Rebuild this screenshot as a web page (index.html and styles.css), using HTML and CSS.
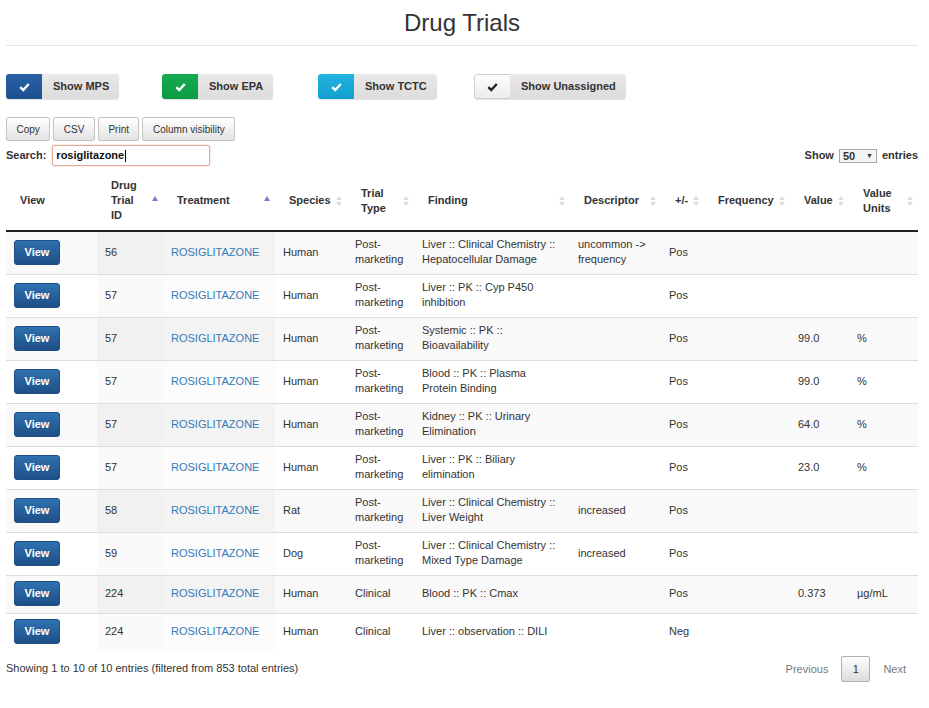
FILE: index.html
```html
<!DOCTYPE html>
<html>
<head>
<meta charset="utf-8">
<title>Drug Trials</title>
<link rel="stylesheet" href="styles.css">
</head>
<body>
<div class="page">
  <h1 class="title">Drug Trials</h1>

  <div class="toggles">
    <div class="toggle"><span class="tg-icon mps"><svg width="11" height="10" viewBox="0 0 11 10"><path d="M1.3 5.2 L4.2 8 L9.8 2" fill="none" stroke="#fff" stroke-width="2.4"/></svg></span><span class="tg-label">Show MPS</span></div>
    <div class="toggle"><span class="tg-icon epa"><svg width="11" height="10" viewBox="0 0 11 10"><path d="M1.3 5.2 L4.2 8 L9.8 2" fill="none" stroke="#fff" stroke-width="2.4"/></svg></span><span class="tg-label">Show EPA</span></div>
    <div class="toggle"><span class="tg-icon tctc"><svg width="11" height="10" viewBox="0 0 11 10"><path d="M1.3 5.2 L4.2 8 L9.8 2" fill="none" stroke="#fff" stroke-width="2.4"/></svg></span><span class="tg-label">Show TCTC</span></div>
    <div class="toggle"><span class="tg-icon unassigned"><svg width="11" height="10" viewBox="0 0 11 10"><path d="M1.3 5.2 L4.2 8 L9.8 2" fill="none" stroke="#222" stroke-width="2.4"/></svg></span><span class="tg-label">Show Unassigned</span></div>
  </div>

  <div class="tools">
    <button class="tool">Copy</button>
    <button class="tool">CSV</button>
    <button class="tool">Print</button>
    <button class="tool">Column visibility</button>
  </div>

  <div class="filter-row">
    <label class="search">Search: <span class="search-input">rosiglitazone<span class="caret"></span></span></label>
    <div class="length">Show <span class="select">50 <span class="arrow">▼</span></span> entries</div>
  </div>

  <table class="data">
    <colgroup>
      <col class="c-view"><col class="c-id"><col class="c-treat"><col class="c-species"><col class="c-type"><col class="c-finding"><col class="c-desc"><col class="c-pm"><col class="c-freq"><col class="c-value"><col class="c-units">
    </colgroup>
    <thead>
      <tr>
        <th><div class="th">View</div></th>
        <th><div class="th"><span>Drug Trial ID</span><i class="asc"></i></div></th>
        <th><div class="th"><span>Treatment</span><i class="asc"></i></div></th>
        <th><div class="th"><span>Species</span><i class="both"></i></div></th>
        <th><div class="th"><span>Trial Type</span><i class="both"></i></div></th>
        <th><div class="th"><span>Finding</span><i class="both"></i></div></th>
        <th><div class="th"><span>Descriptor</span><i class="both"></i></div></th>
        <th><div class="th"><span>+/-</span><i class="both"></i></div></th>
        <th><div class="th"><span>Frequency</span><i class="both"></i></div></th>
        <th><div class="th"><span>Value</span><i class="both"></i></div></th>
        <th><div class="th"><span>Value Units</span><i class="both"></i></div></th>
      </tr>
    </thead>
    <tbody>
      <tr class="odd">
        <td><a class="view">View</a></td><td class="s1">56</td><td class="s2"><a class="link">ROSIGLITAZONE</a></td><td>Human</td><td>Post-marketing</td><td>Liver :: Clinical Chemistry :: Hepatocellular Damage</td><td>uncommon -&gt; frequency</td><td>Pos</td><td></td><td></td><td></td>
      </tr>
      <tr class="even">
        <td><a class="view">View</a></td><td class="s1">57</td><td class="s2"><a class="link">ROSIGLITAZONE</a></td><td>Human</td><td>Post-marketing</td><td>Liver :: PK :: Cyp P450 inhibition</td><td></td><td>Pos</td><td></td><td></td><td></td>
      </tr>
      <tr class="odd">
        <td><a class="view">View</a></td><td class="s1">57</td><td class="s2"><a class="link">ROSIGLITAZONE</a></td><td>Human</td><td>Post-marketing</td><td>Systemic :: PK :: Bioavailability</td><td></td><td>Pos</td><td></td><td>99.0</td><td>%</td>
      </tr>
      <tr class="even">
        <td><a class="view">View</a></td><td class="s1">57</td><td class="s2"><a class="link">ROSIGLITAZONE</a></td><td>Human</td><td>Post-marketing</td><td>Blood :: PK :: Plasma Protein Binding</td><td></td><td>Pos</td><td></td><td>99.0</td><td>%</td>
      </tr>
      <tr class="odd">
        <td><a class="view">View</a></td><td class="s1">57</td><td class="s2"><a class="link">ROSIGLITAZONE</a></td><td>Human</td><td>Post-marketing</td><td>Kidney :: PK :: Urinary Elimination</td><td></td><td>Pos</td><td></td><td>64.0</td><td>%</td>
      </tr>
      <tr class="even">
        <td><a class="view">View</a></td><td class="s1">57</td><td class="s2"><a class="link">ROSIGLITAZONE</a></td><td>Human</td><td>Post-marketing</td><td>Liver :: PK :: Biliary elimination</td><td></td><td>Pos</td><td></td><td>23.0</td><td>%</td>
      </tr>
      <tr class="odd">
        <td><a class="view">View</a></td><td class="s1">58</td><td class="s2"><a class="link">ROSIGLITAZONE</a></td><td>Rat</td><td>Post-marketing</td><td>Liver :: Clinical Chemistry :: Liver Weight</td><td>increased</td><td>Pos</td><td></td><td></td><td></td>
      </tr>
      <tr class="even">
        <td><a class="view">View</a></td><td class="s1">59</td><td class="s2"><a class="link">ROSIGLITAZONE</a></td><td>Dog</td><td>Post-marketing</td><td>Liver :: Clinical Chemistry :: Mixed Type Damage</td><td>increased</td><td>Pos</td><td></td><td></td><td></td>
      </tr>
      <tr class="odd">
        <td><a class="view">View</a></td><td class="s1">224</td><td class="s2"><a class="link">ROSIGLITAZONE</a></td><td>Human</td><td>Clinical</td><td>Blood :: PK :: Cmax</td><td></td><td>Pos</td><td></td><td>0.373</td><td>µg/mL</td>
      </tr>
      <tr class="even">
        <td><a class="view">View</a></td><td class="s1">224</td><td class="s2"><a class="link">ROSIGLITAZONE</a></td><td>Human</td><td>Clinical</td><td>Liver :: observation :: DILI</td><td></td><td>Neg</td><td></td><td></td><td></td>
      </tr>
    </tbody>
  </table>

  <div class="footer">
    <div class="info">Showing 1 to 10 of 10 entries (filtered from 853 total entries)</div>
    <div class="paging">
      <span class="pg disabled">Previous</span>
      <span class="pg current">1</span>
      <span class="pg disabled">Next</span>
    </div>
  </div>
</div>
</body>
</html>
```
FILE: styles.css
```css
* { box-sizing: border-box; }
html, body { margin: 0; padding: 0; background: #fff; }
body {
  font-family: "Liberation Sans", Arial, sans-serif;
  font-size: 11px;
  line-height: 15px;
  color: #333;
}
.page {
  width: 912px;
  margin-left: 6px;
}
.title {
  margin: 0;
  padding: 8px 0 7px;
  font-size: 24px;
  line-height: 30px;
  font-weight: normal;
  text-align: center;
  color: #333;
  border-bottom: 1px solid #e5e5e5;
}

/* toggle buttons */
.toggles {
  display: grid;
  grid-template-columns: repeat(4, 156px);
  margin-top: 28px;
}
.toggle {
  display: inline-flex;
  height: 25px;
  justify-self: start;
  border-radius: 3px;
  overflow: hidden;
  box-shadow: 0 1px 1px rgba(0,0,0,0.12);
}
.tg-icon {
  width: 36px;
  display: flex;
  align-items: center;
  justify-content: center;
}
.tg-icon.mps { background: linear-gradient(#2761a5, #1d5190); }
.tg-icon.epa { background: linear-gradient(#14ab4f, #0b9b43); }
.tg-icon.tctc { background: linear-gradient(#22b3df, #139fcf); }
.tg-icon.unassigned {
  background: linear-gradient(#fdfdfd, #ececec);
  border: 1px solid #d0d0d0;
  border-right: none;
  border-radius: 3px 0 0 3px;
}
.tg-label {
  display: flex;
  align-items: center;
  padding: 0 10px 0 11px;
  font-weight: bold;
  color: #333;
  background: linear-gradient(#e9e9e9, #dcdcdc);
}

/* toolbar buttons */
.tools {
  display: flex;
  gap: 3px;
  margin-top: 18px;
}
.tool {
  height: 24px;
  padding: 0 9.5px;
  font-family: "Liberation Sans", Arial, sans-serif;
  font-size: 10px;
  color: #333;
  background: linear-gradient(#fff, #e3e3e3);
  border: 1px solid #c4c4c4;
  border-radius: 2px;
}

/* search / length */
.filter-row {
  display: flex;
  justify-content: space-between;
  align-items: center;
  margin-top: 4px;
  height: 21px;
}
.search {
  font-weight: bold;
  display: flex;
  align-items: center;
  gap: 6px;
}
.search-input {
  display: inline-flex;
  align-items: center;
  width: 158px;
  height: 21px;
  padding: 0 3px;
  border: 1px solid #e3a994;
  box-shadow: 0 0 2px rgba(232,140,110,0.5);
  border-radius: 2px;
  color: #111;
  font-weight: bold;
}
.caret {
  display: inline-block;
  width: 1px;
  height: 12px;
  background: #000;
  margin-left: 1px;
}
.length {
  font-weight: bold;
  display: flex;
  align-items: center;
  gap: 5px;
}
.select {
  display: inline-flex;
  align-items: center;
  justify-content: space-between;
  width: 38px;
  height: 14px;
  padding: 0 3px;
  border: 1px solid #a9a9a9;
  background: #f4f4f4;
  font-weight: bold;
  line-height: 12px;
}
.select .arrow { font-size: 7px; }

/* table */
.data {
  width: 912px;
  table-layout: fixed;
  border-collapse: collapse;
  margin-top: 7px;
}
.c-view { width: 91px; }
.c-id { width: 66px; }
.c-treat { width: 112px; }
.c-species { width: 72px; }
.c-type { width: 67px; }
.c-finding { width: 156px; }
.c-desc { width: 91px; }
.c-pm { width: 43px; }
.c-freq { width: 86px; }
.c-value { width: 59px; }
.c-units { width: 69px; }

.data th {
  padding: 5px 5px 7px 14px;
  font-weight: bold;
  text-align: left;
  vertical-align: middle;
  border-bottom: 2px solid #222;
}
.th {
  display: flex;
  align-items: center;
  justify-content: space-between;
  gap: 10px;
  min-height: 45px;
}
.th span { min-width: 0; }
.th i { flex: none; display: block; }
.th i.asc {
  width: 0; height: 0;
  border-left: 3.5px solid transparent;
  border-right: 3.5px solid transparent;
  border-bottom: 5px solid #8474d4;
  margin-top: -5px;
}
.th i.both {
  display: flex;
  flex-direction: column;
  align-items: center;
  gap: 2px;
  width: 7px;
}
.th i.both::before,
.th i.both::after {
  content: "";
  width: 0;
  height: 0;
  border-left: 3px solid transparent;
  border-right: 3px solid transparent;
}
.th i.both::before { border-bottom: 4px solid #dcdcdc; }
.th i.both::after { border-top: 4px solid #dcdcdc; }

.data td {
  padding: 5px 8px 7px;
  vertical-align: middle;
  border-top: 1px solid #ddd;
}
.data tbody tr:first-child td { border-top: none; }
.data tr.odd td { background: #f9f9f9; }
.data tr.odd td.s1 { background: #f1f1f1; }
.data tr.odd td.s2 { background: #f3f3f3; }
.data tr.even td { background: #fff; }
.data tr.even td.s1 { background: #fafafa; }
.data tr.even td.s2 { background: #fcfcfc; }

.view {
  display: inline-flex;
  align-items: center;
  justify-content: center;
  width: 46px;
  height: 25px;
  color: #fff;
  font-weight: bold;
  background: linear-gradient(#2f71b0, #1f4f86);
  border: 1px solid #1f4e83;
  border-radius: 3px;
}
.link { color: #337ab7; text-decoration: none; }

/* footer */
.footer {
  display: flex;
  justify-content: space-between;
  align-items: flex-start;
  margin-top: 5px;
}
.info { padding-top: 5px; }
.paging {
  display: flex;
  align-items: center;
}
.pg {
  display: inline-flex;
  align-items: center;
  justify-content: center;
  height: 26px;
  padding: 0 12px;
  color: #777;
}
.pg.current {
  width: 29px;
  padding: 0;
  color: #333;
  border: 1px solid #b0b0b0;
  border-radius: 2px;
  background: linear-gradient(#fff, #dcdcdc);
  margin: 0 1px;
}
```
